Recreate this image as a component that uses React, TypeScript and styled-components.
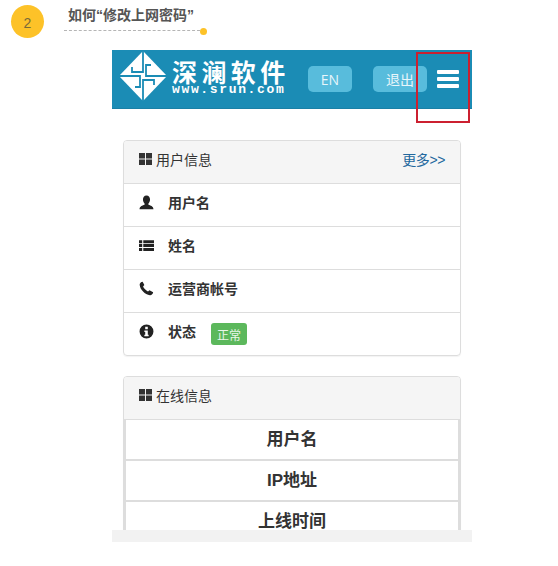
import React from 'react';
import styled, { createGlobalStyle } from 'styled-components';

const GlobalStyle = createGlobalStyle`
  html, body {
    margin: 0;
    padding: 0;
    background: #fff;
  }
  body {
    font-family: "Liberation Sans", "Noto Sans CJK SC", sans-serif;
  }
`;

const Page = styled.div`
  width: 558px;
  height: 566px;
  overflow: hidden;
  display: flex;
  flex-direction: column;
`;

const StepHeader = styled.div`
  height: 50px;
  flex: none;
  padding: 5px 0 0 11px;
  box-sizing: border-box;
  display: flex;
  gap: 20px;
`;

const StepBadge = styled.div`
  width: 33px;
  height: 33px;
  padding-top: 2px;
  box-sizing: border-box;
  border-radius: 50%;
  background: #fdc228;
  color: #7a6a3a;
  font-size: 14px;
  display: flex;
  align-items: center;
  justify-content: center;
`;

const StepText = styled.div`
  display: flex;
  flex-direction: column;
  width: 136px;
`;

const StepTitle = styled.div`
  font-size: 14px;
  font-weight: 700;
  color: #555;
  line-height: 20px;
  padding-left: 4px;
  white-space: nowrap;
`;

const StepLine = styled.div`
  position: relative;
  margin-top: 5px;
  border-top: 1px dashed #b5b5b5;
  &::after {
    content: '';
    position: absolute;
    right: -7px;
    top: -3px;
    width: 7px;
    height: 7px;
    border-radius: 50%;
    background: #fdc228;
  }
`;

const Phone = styled.div`
  position: relative;
  width: 360px;
  height: 492px;
  margin-left: 112px;
  flex: none;
  display: flex;
  flex-direction: column;
  background: #f2f2f2;
`;

const NavBar = styled.div`
  height: 59px;
  flex: none;
  background: #1b8cb5;
  border-bottom: 1px solid #1a80a6;
  box-sizing: border-box;
  display: flex;
  align-items: center;
  padding: 0 13px 0 7px;
`;

const Brand = styled.div`
  display: flex;
  align-items: center;
  gap: 5px;
  color: #fff;
  margin-bottom: 7px;
`;

const BrandText = styled.div`
  display: flex;
  flex-direction: column;
  width: 114px;
  padding-top: 4px;
  white-space: nowrap;
`;

const BrandName = styled.div`
  font-size: 25px;
  font-weight: 700;
  line-height: 24px;
  letter-spacing: 4.4px;
  font-family: "Noto Sans CJK SC", sans-serif;
`;

const BrandUrl = styled.div`
  font-size: 13px;
  font-weight: 700;
  line-height: 13px;
  letter-spacing: 1.65px;
  font-family: "Liberation Mono", monospace;
`;

const NavButton = styled.div<{ $width: number; $left: number }>`
  width: ${(p) => p.$width}px;
  margin-left: ${(p) => p.$left}px;
  height: 26px;
  border-radius: 5px;
  background: #58bcdc;
  color: #e8f6fb;
  font-family: "Open Sans", "Noto Sans CJK SC", sans-serif;
  font-size: 14px;
  display: flex;
  align-items: center;
  justify-content: center;
  flex: none;
`;

const Burger = styled.div`
  margin-left: 10px;
  width: 22px;
  display: flex;
  flex-direction: column;
  gap: 3px;
  flex: none;
  span {
    height: 4px;
    background: #fff;
    border-radius: 1px;
  }
`;

const RedBox = styled.div`
  position: absolute;
  left: 304px;
  top: 2px;
  width: 54px;
  height: 71px;
  box-sizing: border-box;
  border: 2px solid #cc2030;
`;

const Content = styled.div`
  flex: 1;
  min-height: 0;
  overflow: hidden;
  background: #fff;
  padding: 31px 11px 0;
  display: flex;
  flex-direction: column;
  gap: 20px;
`;

const Card = styled.div`
  flex: none;
  border: 1px solid #ddd;
  border-radius: 4px;
  box-shadow: 0 1px 1px rgba(0, 0, 0, 0.05);
  overflow: hidden;
`;

const CardHeader = styled.div`
  height: 43px;
  box-sizing: border-box;
  background: #f5f5f5;
  border-bottom: 1px solid #ddd;
  padding: 0 15px 6px;
  display: flex;
  align-items: center;
  font-size: 14px;
  color: #333;
`;

const HeaderTitle = styled.div`
  display: flex;
  align-items: center;
  gap: 3px;
  flex: 1;
`;

const MoreLink = styled.a`
  color: #23689e;
  font-size: 14px;
  letter-spacing: -0.4px;
`;

const Row = styled.div`
  height: 43px;
  box-sizing: border-box;
  border-bottom: 1px solid #ddd;
  padding: 0 15px 6px;
  display: flex;
  align-items: center;
  font-size: 14px;
  font-weight: 700;
  color: #333;
  &:last-child {
    height: 42px;
    border-bottom: 0;
  }
`;

const RowIcon = styled.svg`
  width: 15px;
  height: 15px;
  flex: none;
  margin-right: 14px;
  fill: #222;
`;

const Label = styled.span`
  background: #5cb85c;
  color: #e9f6e9;
  font-size: 12px;
  font-weight: 400;
  border-radius: 3px;
  width: 36px;
  height: 22px;
  margin: 6px 0 0 15px;
  display: flex;
  align-items: center;
  justify-content: center;
`;

const Cell = styled.div`
  height: 41px;
  box-sizing: border-box;
  border: 2px solid #ddd;
  border-top: 0;
  padding-bottom: 5px;
  display: flex;
  align-items: center;
  justify-content: center;
  font-size: 17px;
  font-weight: 700;
  color: #333;
`;

const BottomBar = styled.div`
  height: 12px;
  flex: none;
  background: #f2f2f2;
`;

const Grid = () => (
  <svg width="14" height="14" viewBox="0 0 14 14" fill="#333">
    <rect x="0" y="1" width="6" height="5.5" />
    <rect x="7" y="1" width="6" height="5.5" />
    <rect x="0" y="7.5" width="6" height="5.5" />
    <rect x="7" y="7.5" width="6" height="5.5" />
  </svg>
);

const Logo = () => (
  <svg width="48" height="50" viewBox="0 0 48 50">
    <path d="M24 0 L48 25 L24 50 L0 25 Z" fill="#fff" />
    <g fill="none" stroke="#1b8cb5" strokeWidth="1.8">
      <path d="M24 0 V21 H13 V16" />
      <path d="M48 25 H27 V14 H32" />
      <path d="M24 50 V29 H35 V34" />
      <path d="M0 25 H21 V36 H16" />
    </g>
  </svg>
);

export default function App() {
  return (
    <Page>
      <GlobalStyle />
      <StepHeader>
        <StepBadge>2</StepBadge>
        <StepText>
          <StepTitle>如何“修改上网密码”</StepTitle>
          <StepLine />
        </StepText>
      </StepHeader>
      <Phone>
        <NavBar>
          <Brand>
            <Logo />
            <BrandText>
              <BrandName>深澜软件</BrandName>
              <BrandUrl>www.srun.com</BrandUrl>
            </BrandText>
          </Brand>
          <NavButton $width={44} $left={22}>EN</NavButton>
          <NavButton $width={54} $left={21}>退出</NavButton>
          <Burger>
            <span />
            <span />
            <span />
          </Burger>
        </NavBar>
        <RedBox />
        <Content>
          <Card>
            <CardHeader>
              <HeaderTitle>
                <Grid />
                用户信息
              </HeaderTitle>
              <MoreLink>更多&gt;&gt;</MoreLink>
            </CardHeader>
            <Row>
              <RowIcon viewBox="0 0 14 14">
                <path d="M7 0.5 C9.2 0.5 10.3 2.2 10.3 4.3 C10.3 6 9.6 7.2 8.8 8 L8.8 9 C10.5 9.8 13.5 10.2 13.5 13.2 L0.5 13.2 C0.5 10.2 3.5 9.8 5.2 9 L5.2 8 C4.4 7.2 3.7 6 3.7 4.3 C3.7 2.2 4.8 0.5 7 0.5 Z" />
              </RowIcon>
              用户名
            </Row>
            <Row>
              <RowIcon viewBox="0 0 14 14">
                <path d="M0 2h3v2.8H0zM4 2h10v2.8H4zM0 5.7h3v2.8H0zM4 5.7h10v2.8H4zM0 9.4h3v2.8H0zM4 9.4h10v2.8H4z" />
              </RowIcon>
              姓名
            </Row>
            <Row>
              <RowIcon viewBox="0 0 14 14">
                <path d="M3.4 0.6 L5 3.8 L3.8 5.2 C4.5 7 6.5 9 8.4 9.8 L9.8 8.6 L13.2 10.4 C13 12 11.6 13.4 10.2 13.2 C5.6 12.6 1 8 0.6 3.4 C0.6 2 1.8 0.8 3.4 0.6 Z" />
              </RowIcon>
              运营商帐号
            </Row>
            <Row>
              <RowIcon viewBox="0 0 14 14">
                <path
                  fillRule="evenodd"
                  d="M7 0.5 A6.5 6.5 0 1 0 7 13.5 A6.5 6.5 0 1 0 7 0.5 Z M5.8 2.6 H8.2 V4.8 H5.8 Z M5 6 H8.2 V10 H9 V11.4 H5 V10 H5.8 V7.4 H5 Z"
                />
              </RowIcon>
              状态
              <Label>正常</Label>
            </Row>
          </Card>
          <Card>
            <CardHeader>
              <HeaderTitle>
                <Grid />
                在线信息
              </HeaderTitle>
            </CardHeader>
            <Cell>用户名</Cell>
            <Cell>IP地址</Cell>
            <Cell>上线时间</Cell>
          </Card>
        </Content>
        <BottomBar />
      </Phone>
    </Page>
  );
}
